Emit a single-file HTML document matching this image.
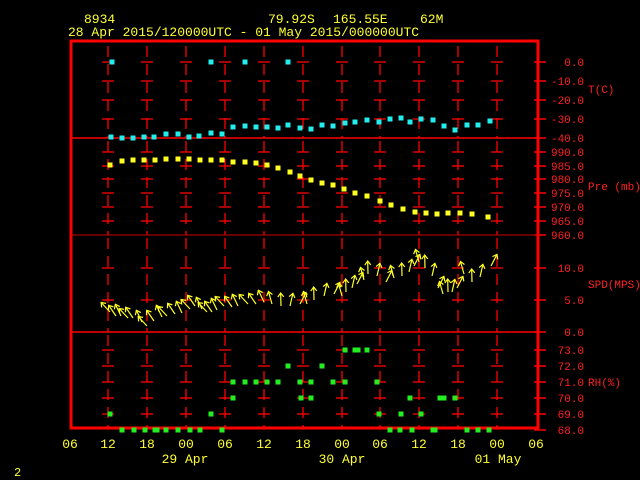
<!DOCTYPE html>
<html><head><meta charset="utf-8"><style>
html,body{margin:0;padding:0;background:#000;width:640px;height:480px;overflow:hidden}
svg{display:block}
text{font-family:"Liberation Mono","DejaVu Sans Mono",monospace}
.y{fill:#ffff33;font-size:13px}
.r{fill:#ff2020;font-size:11px}
</style></head><body>
<svg id="s" width="640" height="480" viewBox="0 0 640 480">
<rect width="640" height="480" fill="#000"/>
<text class="y" x="84" y="23">8934</text>
<text class="y" x="268" y="23">79.92S</text>
<text class="y" x="333" y="23">165.55E</text>
<text class="y" x="420" y="23">62M</text>
<text class="y" x="68" y="36">28 Apr 2015/120000UTC - 01 May 2015/000000UTC</text>
<g id="g" stroke="#ff0000" fill="none"></g>
<rect x="71" y="41" width="467" height="387" fill="none" stroke="#ff0000" stroke-width="3"/>
<line x1="71" y1="138" x2="538" y2="138" stroke="#ff0000" stroke-width="1.5"/>
<line x1="71" y1="235" x2="538" y2="235" stroke="#c00" stroke-width="1"/>
<line x1="71" y1="332" x2="538" y2="332" stroke="#ff0000" stroke-width="1.5"/>
<g class="r" text-anchor="end">
<text x="584" y="66">0.0</text><text x="584" y="85">-10.0</text><text x="584" y="104">-20.0</text><text x="584" y="123">-30.0</text><text x="584" y="142">-40.0</text>
<text x="584" y="156">990.0</text><text x="584" y="170">985.0</text><text x="584" y="183">980.0</text><text x="584" y="197">975.0</text><text x="584" y="211">970.0</text><text x="584" y="225">965.0</text><text x="584" y="239">960.0</text>
<text x="584" y="272">10.0</text><text x="584" y="304">5.0</text><text x="584" y="336">0.0</text>
<text x="584" y="354">73.0</text><text x="584" y="370">72.0</text><text x="584" y="386">71.0</text><text x="584" y="402">70.0</text><text x="584" y="418">69.0</text><text x="584" y="434">68.0</text>
</g>
<g class="r">
<text x="588" y="93">T(C)</text><text x="588" y="190">Pre (mb)</text><text x="588" y="288">SPD(MPS)</text><text x="588" y="386">RH(%)</text>
</g>
<g class="y" text-anchor="middle">
<text x="70" y="448">06</text><text x="108" y="448">12</text><text x="147" y="448">18</text><text x="186" y="448">00</text><text x="225" y="448">06</text><text x="264" y="448">12</text><text x="303" y="448">18</text><text x="342" y="448">00</text><text x="380" y="448">06</text><text x="419" y="448">12</text><text x="458" y="448">18</text><text x="497" y="448">00</text><text x="536" y="448">06</text>
<text x="185" y="463">29 Apr</text><text x="342" y="463">30 Apr</text><text x="498" y="463">01 May</text>
</g>
<text class="y" x="14" y="476" style="font-size:12px">2</text>
<g id="d"></g>
</svg>
<script>
var g=document.getElementById('g'),d=document.getElementById('d'),NS='http://www.w3.org/2000/svg';
function el(p,n,a){var e=document.createElementNS(NS,n);for(var k in a)e.setAttribute(k,a[k]);p.appendChild(e);return e;}
var xs=[108,147,186,225,264,303,342,380,419,458,497];
var ys=[62,81,100,119,152,166,179,193,207,221,268,300,350,366,382,398,414];
xs.forEach(function(x){
 [[46,138],[141,235],[238,332],[335,428]].forEach(function(r){el(g,'line',{x1:x,y1:r[0],x2:x,y2:r[1],'stroke-width':1.3,'stroke-dasharray':'11,7'});});
 ys.forEach(function(y){el(g,'line',{x1:x-6,y1:y,x2:x+6,y2:y,'stroke-width':1.3});});
});
ys.concat([138,235,332,430]).forEach(function(y){el(g,'line',{x1:534,y1:y,x2:546,y2:y,'stroke-width':1.5});});
function sq(c,pts,s){pts.forEach(function(p){el(d,'rect',{x:p[0]-s/2,y:p[1]-s/2,width:s,height:s,fill:c});});}
sq('#22eeee',[[112,62],[211,62],[245,62],[288,62],[111,137],[122,138],[133,138],[144,137],[154,137],[166,134],[178,134],[189,137],[199,136],[211,133],[222,134],[233,127],[245,126],[256,127],[267,127],[278,128],[288,125],[300,128],[311,129],[322,125],[333,126],[345,123],[355,122],[367,120],[379,122],[390,119],[401,118],[410,122],[421,119],[433,120],[444,126],[455,130],[467,125],[478,125],[490,121]],5);
sq('#ffff22',[[110,165],[122,161],[133,160],[144,160],[155,160],[166,159],[178,159],[189,159],[200,160],[211,160],[222,160],[233,162],[245,162],[256,163],[267,165],[278,168],[290,172],[300,176],[311,180],[322,183],[333,185],[344,189],[355,193],[367,196],[380,201],[391,205],[403,209],[415,212],[426,213],[437,214],[448,213],[460,213],[472,214],[488,217]],5);
sq('#22ee22',[[110,414],[211,414],[379,414],[401,414],[421,414],[233,398],[301,398],[311,398],[410,398],[440,398],[444,398],[455,398],[233,382],[245,382],[256,382],[267,382],[278,382],[300,382],[311,382],[333,382],[345,382],[377,382],[288,366],[322,366],[345,350],[355,350],[358,350],[367,350],[122,430],[134,430],[145,430],[155,430],[157,430],[166,430],[178,430],[190,430],[200,430],[222,430],[390,430],[400,430],[412,430],[433,430],[435,430],[467,430],[478,430],[489,430]],5);
var w=[[110,312],[116,316],[121,316],[128,318],[133,318],[142,322],[147,326],[154,321],[162,317],[167,316],[175,314],[182,313],[190,309],[195,306],[202,309],[207,312],[212,312],[217,310],[224,306],[232,307],[238,306],[248,304],[256,304],[264,302],[272,304],[281,306],[290,306],[300,304],[307,304],[314,300],[324,296],[334,294],[342,296],[346,292],[352,288],[357,284],[364,280],[368,274],[377,276],[386,282],[394,278],[402,276],[409,272],[414,266],[419,262],[425,268],[432,276],[438,288],[443,294],[448,292],[452,292],[457,288],[464,274],[472,282],[480,277],[491,266]];
w.forEach(function(p,i){var a=i<24?-0.75+(i%3)*0.15:(i%4-1.5)*0.25+0.1;var x=p[0],y=p[1],l=13;
var ux=Math.sin(a),uy=-Math.cos(a),px=-uy,py=ux;var ex=x+ux*l,ey=y+uy*l;
el(d,'line',{x1:x,y1:y,x2:ex,y2:ey,stroke:'#ffff22','stroke-width':1.2});
el(d,'polyline',{points:(ex-4*ux+3*px)+','+(ey-4*uy+3*py)+' '+ex+','+ey+' '+(ex-4*ux-3*px)+','+(ey-4*uy-3*py),stroke:'#ffff22',fill:'none','stroke-width':1.2});});
</script>
</body></html>
